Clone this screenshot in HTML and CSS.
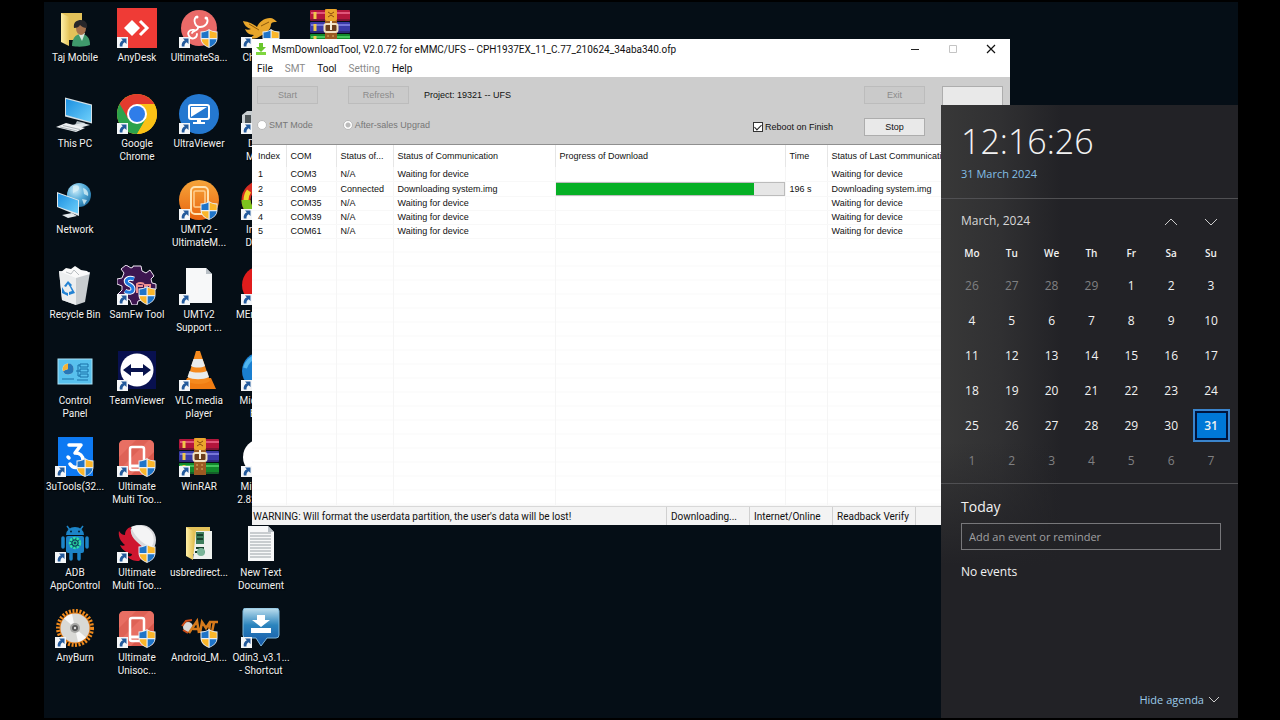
FILE: index.html
```html
<!DOCTYPE html>
<html lang="en">
<head>
  <meta charset="UTF-8">
  <meta name="viewport" content="width=device-width, initial-scale=1.0">
  <link rel="stylesheet" href="styles.css">
  <title>Desktop</title>
</head>
<body>

<!-- shared icon parts -->
<svg class="defs" aria-hidden="true">
  <defs>
    <linearGradient id="screen" x1="0" y1="0" x2="1" y2="1"><stop offset="0" stop-color="#1b8fe0"/><stop offset="1" stop-color="#6fd0fb"/></linearGradient>
    <linearGradient id="folder" x1="0" y1="0" x2="1" y2="0"><stop offset="0" stop-color="#fff0a8"/><stop offset="1" stop-color="#e6c65c"/></linearGradient>
    <linearGradient id="orange" x1="0" y1="0" x2="0" y2="1"><stop offset="0" stop-color="#f6a53a"/><stop offset="1" stop-color="#e8630f"/></linearGradient>
    <linearGradient id="odin" x1="0" y1="0" x2="0" y2="1"><stop offset="0" stop-color="#bfe0ef"/><stop offset=".45" stop-color="#2b84bd"/><stop offset="1" stop-color="#1557a8"/></linearGradient>
    <radialGradient id="globe" cx=".35" cy=".3" r=".8"><stop offset="0" stop-color="#cfeefb"/><stop offset=".5" stop-color="#58aeda"/><stop offset="1" stop-color="#1d6b9e"/></radialGradient>
    <symbol id="arrow" viewBox="0 0 40 40">
      <rect x="0" y="29" width="11" height="11" fill="#f4f6f8"/>
      <path d="M4 30.500h5.500v5.500l-1.800-1.800c-1.700 1-2.400 2.300-2.200 4.300H2.800c-.5-3 .6-5 3-6.200z" fill="#235a9c"/>
    </symbol>
    <symbol id="shield" viewBox="0 0 40 40">
      <path d="M30 21c2.500 1.800 5 2.400 8.500 2.500V30c0 4.500-3 7.500-8.500 10-5.500-2.500-8.500-5.500-8.500-10v-6.500c3.500 0 6-.7 8.500-2.500z" fill="#e9eef2"/>
      <path d="M29.500 22.500v7.500h-7v-5.500c3-.2 5-.8 7-2z" fill="#1f74c8"/>
      <path d="M30.700 22.500c2 1.200 4 1.800 7 2V30h-7z" fill="#fbb62a"/>
      <path d="M22.600 31.300h6.900V39c-4-2-6.500-4.200-6.900-7.700z" fill="#fbb62a"/>
      <path d="M30.700 31.300h6.900c-.5 3.500-2.900 5.700-6.900 7.700z" fill="#1f74c8"/>
    </symbol>
    <symbol id="winrar" viewBox="0 0 40 40">
      <rect x="0" y="2" width="40" height="11" rx="1" fill="#b3163c"/><path d="M1 4h39v2H1z" fill="#e0567a"/>
      <rect x="0" y="14" width="40" height="11" rx="1" fill="#3a3aa8"/><path d="M1 16h39v2H1z" fill="#7676d8"/>
      <rect x="0" y="26" width="40" height="11" rx="1" fill="#128a2c"/><path d="M1 28h39v2H1z" fill="#44c35c"/>
      <path d="M5 4v7M5 16v7M5 28v7" stroke="#f0c84a" stroke-width="3"/>
      <path d="M0 12h40M0 24h40M0 36h40" stroke="#1a1024" stroke-opacity=".35" stroke-width="2"/>
      <rect x="15" y="1" width="12" height="37" fill="#9b5a22"/>
      <rect x="15" y="1" width="12" height="12" rx="2" fill="#eaa62c"/>
      <path d="M18 4l3 2 3-2M18 9l3-2 3 2" stroke="#8b4a10" fill="none"/>
      <rect x="14.500" y="16" width="13" height="8" rx="2" fill="#6b3d1c" stroke="#f0e0c0" stroke-width="2"/>
      <path d="M21 13v9" stroke="#f7edda" stroke-width="2"/>
      <path d="M18 28h.1M23 28h.1M18 32h.1M23 32h.1" stroke="#e8c070" stroke-width="1.500" stroke-linecap="round"/>
    </symbol>
    <symbol id="redphone" viewBox="0 0 40 40">
      <rect x="2" y="3" width="35" height="35" rx="5" fill="#d9574b"/>
      <path d="M7 3h25a5 5 0 0 1 5 5v7L14 38H7a5 5 0 0 1-5-5V8a5 5 0 0 1 5-5z" fill="#e86f63"/>
      <path d="M2 20L19 3h13L2 33z" fill="#de6256"/>
      <rect x="13" y="10" width="14" height="23" rx="2" fill="none" stroke="#fff" stroke-width="2.500"/>
      <path d="M13 29h14" stroke="#fff" stroke-width="3"/>
    </symbol>
    <symbol id="page" viewBox="0 0 40 40">
      <path d="M7 3h20l6 6v29H7z" fill="#f7f8f9"/><path d="M27 3v6h6z" fill="#b9c0c6"/>
    </symbol>
  </defs>
</svg>

<main class="desktop">
  <nav class="icons" aria-label="Desktop icons">
    <a class="icon" href="#">
      <svg viewBox="0 0 40 40"><path d="M6 5h21v27H12z" fill="#e3c25a"/><path d="M6 5l8 4v29l-8-4z" fill="url(#folder)"/><path d="M17 38c0-7 3-12 9-12s9 4 9 11c-5 2-13 2-18 1z" fill="#3f9a6c"/><path d="M23 25h7l-3 8z" fill="#d8e8df"/><ellipse cx="26" cy="20" rx="5" ry="7" fill="#a5714c"/><path d="M19 20c-1-6 3-8 7-8s7 3 6 8c-3 0-5-1-7-3-1 2-3 3-6 3z" fill="#27262a"/></svg>
      <span>Taj Mobile</span>
    </a>
    <a class="icon" href="#">
      <svg viewBox="0 0 40 40"><path d="M10 3.500l27 7v19l-27-7z" fill="#d5e0e6"/><path d="M11 5l25 6.500v16.500l-25-7z" fill="url(#screen)"/><path d="M22 27l8 2-2 3-8-1z" fill="#aeb8be"/><path d="M17 31l11-2 7 2-11 3z" fill="#dfe5e8"/><path d="M1 33l10-4 19 5-9 4z" fill="#eef1f3"/><path d="M5 33l17 4M8 31.500l17 4" stroke="#98a2a8" stroke-width=".8"/></svg>
      <span>This PC</span>
    </a>
    <a class="icon" href="#">
      <svg viewBox="0 0 40 40"><circle cx="24" cy="15" r="12" fill="url(#globe)"/><path d="M18 6c4-2 7 0 6 3s-5 2-6 5M28 8c4 1 6 5 5 8l-4-2zM27 19l5 1-3 5z" fill="#d8f0f6" fill-opacity=".8"/><path d="M2 12l22 8v16L2 27z" fill="#dfe7eb"/><path d="M3 13.500l20 7v13l-20-7z" fill="url(#screen)"/><path d="M7 35l10-2 5 3-9 2z" fill="#e2e8eb"/></svg>
      <span>Network</span>
    </a>
    <a class="icon" href="#">
      <svg viewBox="0 0 40 40"><path d="M4 6l31 1-5 30-9 3-14-5z" fill="#c9cdd0"/><path d="M4 6l17 4v30L7 35z" fill="#eceeef"/><path d="M6 7l5-4 5 1 4-3 6 4 6 1 3 3-14 4z" fill="#fafafa"/><path d="M11 7l5 2 3-4 5 5" stroke="#b9bec1" fill="none"/><path d="M9 21l4-5 4 4-2 2-2-3-2 3zM16 21l4 7-6 2v-3l3-1-2-4zM7 22l3 5 3 1v3l-6-3z" fill="#2383d4"/></svg>
      <span>Recycle Bin</span>
    </a>
    <a class="icon" href="#">
      <svg viewBox="0 0 40 40"><rect x="3" y="8" width="34" height="25" fill="#58c1ee" stroke="#a9e2f7"/><circle cx="13" cy="18" r="5.500" fill="#fff3cf"/><path d="M13 18V12.500A5.500 5.500 0 1 1 8 20z" fill="#2877b8"/><path d="M13 18V12.500a5.500 5.500 0 0 0-5 7.500z" fill="#f2b238"/><path d="M21 20h4M23 14v11M25 13h8v3h-8zM25 18h8v3h-8zM25 23h8v3h-8zM23 14h2M23 25h2" stroke="#1870a8" fill="none"/><path d="M7 28h12M22 29h11" stroke="#1870a8"/></svg>
      <span>Control<br>Panel</span>
    </a>
    <a class="icon" href="#">
      <svg viewBox="0 0 40 40"><rect x="3" y="0" width="35" height="39" fill="#0d79f2"/><path d="M14 8h12l-6 8c5 0 8 3 8 7" fill="none" stroke="#fff" stroke-width="3.500" stroke-linejoin="round" stroke-linecap="round"/><path d="M13 20l1 1M15 27c2 3 5 4 8 3" fill="none" stroke="#fff" stroke-width="3.500" stroke-linecap="round"/><use href="#shield"/><use href="#arrow"/></svg>
      <span>3uTools(32...</span>
    </a>
    <a class="icon" href="#">
      <svg viewBox="0 0 40 40"><path d="M12 3l3 4M28 3l-3 4" stroke="#1c84c8" stroke-width="1.500"/><path d="M11 12a9 8 0 0 1 18 0z" fill="#1c84c8"/><circle cx="16" cy="8.500" r="1" fill="#062030"/><circle cx="24" cy="8.500" r="1" fill="#062030"/><rect x="11" y="13" width="18" height="17" rx="2" fill="#1c84c8"/><path d="M8 15v9M32 15v9M16 29v7M24 29v7" stroke="#1c84c8" stroke-width="3.500" stroke-linecap="round"/><circle cx="20" cy="20" r="5" fill="#0b4b62" stroke="#2fe0a8" stroke-width="2.500" stroke-dasharray="2.500 1"/><circle cx="20" cy="20" r="2" fill="none" stroke="#2fe0a8"/><use href="#arrow"/></svg>
      <span>ADB<br>AppControl</span>
    </a>
    <a class="icon" href="#">
      <svg viewBox="0 0 40 40"><circle cx="20" cy="20" r="17" fill="none" stroke="#f08a1c" stroke-width="4" stroke-dasharray="2 1.500"/><circle cx="20" cy="20" r="15.500" fill="#e07a18"/><circle cx="20" cy="20" r="14.500" fill="#d9d9d6"/><path d="M20 20L9 10.500A14.500 14.500 0 0 1 17 6zM20 20l11 9.500A14.500 14.500 0 0 1 23 34z" fill="#f8f8f8"/><circle cx="20" cy="20" r="5" fill="#a5a5a3"/><circle cx="20" cy="20" r="3" fill="#555"/><circle cx="20" cy="20" r="1.200" fill="#ddd"/><use href="#arrow"/></svg>
      <span>AnyBurn</span>
    </a>

    <a class="icon" href="#">
      <svg viewBox="0 0 40 40"><rect width="40" height="40" fill="#ef3b36"/><path d="M15 12l8 8-8 8-8-8z" fill="#fff"/><path d="M23 13l7 7-7 7" fill="none" stroke="#fff" stroke-width="3"/><use href="#arrow"/></svg>
      <span>AnyDesk</span>
    </a>
    <a class="icon" href="#">
      <svg viewBox="0 0 40 40"><circle cx="20" cy="20" r="20" fill="#fbc116"/><path d="M20 20L2.700 10A20 20 0 0 0 20 40l8.700-15z" fill="#2ba24c"/><path d="M2.700 10A20 20 0 0 1 37.300 10H20L11.300 25z" fill="#e33b2e"/><path d="M20 10h17.300A20 20 0 0 1 20 40l9-15z" fill="#fbc116"/><circle cx="20" cy="20" r="10" fill="#fff"/><circle cx="20" cy="20" r="8" fill="#2f7de9"/><use href="#arrow"/></svg>
      <span>Google<br>Chrome</span>
    </a>
    <div class="free-cell"></div>
    <a class="icon" href="#">
      <svg viewBox="0 0 40 40"><path d="M16 1h8l1 5 4 2 4-3 4 6-3 3 1 4 4 1v5l-4 2-2 4 2 4-6 4-4-3-4 1-1 4h-5l-2-5-4-2-5 2-3-6 4-4v-4l-5-2v-5l5-1 2-5-3-4 5-4 5 3 2-1z" fill="#3d1650" stroke="#f1e8f4"/><path d="M17 14c-6-2-9 1-7 4 2 2 6 2 6 6s-5 4-8 2" fill="none" stroke="#fff" stroke-width="5"/><path d="M17 14c-6-2-9 1-7 4 2 2 6 2 6 6s-5 4-8 2" fill="none" stroke="#1f79e0" stroke-width="3"/><path d="M20 28v-9c3-2 5-1 7 0M21 21h5M28 24v-4h5v4" stroke="#f09090" stroke-width="2" fill="none"/><use href="#shield"/><use href="#arrow"/></svg>
      <span>SamFw Tool</span>
    </a>
    <a class="icon" href="#">
      <svg viewBox="0 0 40 40"><rect x="1" y="0" width="38" height="38" fill="#08104f"/><circle cx="20" cy="19" r="16.500" fill="#fff"/><path d="M6 19l8-6v4h12v-4l8 6-8 6v-4H14v4z" fill="#08134d"/><use href="#arrow"/></svg>
      <span>TeamViewer</span>
    </a>
    <a class="icon" href="#">
      <svg viewBox="0 0 40 40"><use href="#redphone"/><use href="#shield"/><use href="#arrow"/></svg>
      <span>Ultimate<br>Multi Too...</span>
    </a>
    <a class="icon" href="#">
      <svg viewBox="0 0 40 40"><circle cx="24" cy="17" r="15" fill="#d9d9dc"/><path d="M14 4c7-4 17-1 21 6 3 6 2 12-2 15-4-4-14-8-19-21z" fill="#f4f4f5"/><path d="M14 4c-2 10 6 15 13 21 3 3 0 9-5 13-5 0-9-1-12-5 3 1 5 0 5-2-5-1-10-4-12-9 2 1 4 1 5 0C3 18 1 13 2 8c2 3 4 4 6 4 0-4 2-7 6-8z" fill="#cf1630"/><use href="#shield"/><use href="#arrow"/></svg>
      <span>Ultimate<br>Multi Too...</span>
    </a>
    <a class="icon" href="#">
      <svg viewBox="0 0 40 40"><use href="#redphone"/><use href="#shield"/><use href="#arrow"/></svg>
      <span>Ultimate<br>Unisoc...</span>
    </a>

    <a class="icon" href="#">
      <svg viewBox="0 0 40 40"><circle cx="20" cy="20" r="18" fill="#ea6a68"/><path d="M17 9c-3 3-1 10 4 10s9-4 7-9M19 19c1 4-5 3-6 6M15 22c-5-1-7 3-5 6 2 4 8 3 8-2" fill="none" stroke="#fff" stroke-width="1.800" stroke-linecap="round"/><circle cx="18" cy="9" r="1.500" fill="#fff"/><circle cx="27" cy="10" r="1.500" fill="#fff"/><use href="#shield"/><use href="#arrow"/></svg>
      <span>UltimateSa...</span>
    </a>
    <a class="icon" href="#">
      <svg viewBox="0 0 40 40"><circle cx="20" cy="20" r="20" fill="#2478d0"/><rect x="10" y="11" width="20" height="14" rx="2" fill="#2478d0" stroke="#fff" stroke-width="2"/><path d="M12 13h16L12 23z" fill="#fff"/><path d="M18 25h4v3h4v2H14v-2h4z" fill="#fff"/><use href="#arrow"/></svg>
      <span>UltraViewer</span>
    </a>
    <a class="icon" href="#">
      <svg viewBox="0 0 40 40"><circle cx="20" cy="20" r="20" fill="url(#orange)"/><rect x="12" y="7" width="17" height="27" rx="4" fill="none" stroke="#ffe3b3" stroke-width="2"/><rect x="15" y="11" width="11" height="16" rx="1" fill="none" stroke="#ffcf90" stroke-width="1.500"/><use href="#shield"/><use href="#arrow"/></svg>
      <span>UMTv2 -<br>UltimateM...</span>
    </a>
    <a class="icon" href="#">
      <svg viewBox="0 0 40 40"><use href="#page"/><use href="#arrow"/></svg>
      <span>UMTv2<br>Support ...</span>
    </a>
    <a class="icon" href="#">
      <svg viewBox="0 0 40 40"><path d="M8 27h24l5 11H3z" fill="#f07c12"/><path d="M17 0h4l10 30c-5 4-18 4-23 0z" fill="#f58a1e"/><path d="M14.500 8h9l2.500 7c-4 2-10 2-14 0zM10.500 20c5 2 12 2 17.500 0l2 6c-6 3-16 3-21.500 0z" fill="#e9ecec"/><use href="#arrow"/></svg>
      <span>VLC media<br>player</span>
    </a>
    <a class="icon" href="#">
      <svg viewBox="0 0 40 40"><use href="#winrar"/><use href="#arrow"/></svg>
      <span>WinRAR</span>
    </a>
    <a class="icon" href="#">
      <svg viewBox="0 0 40 40"><path d="M7 4h24v27H13z" fill="#e3c25a"/><path d="M17 8h16v28H14z" fill="#eef1ee"/><rect x="17" y="9" width="8" height="12" fill="#3e7d5c"/><path d="M18 12h6M18 16h6M17 25h8M16 29h10" stroke="#173f2c" stroke-width="2"/><circle cx="22" cy="29" r="4" fill="#7ab498"/><path d="M7 4l7 4v29l-7-4z" fill="url(#folder)"/></svg>
      <span>usbredirect...</span>
    </a>
    <a class="icon" href="#">
      <svg viewBox="0 0 40 40"><circle cx="9" cy="19" r="5" fill="#d8d8d8"/><path d="M3 18l4-5 6-1M4 22l5 3" stroke="#cc4b17" stroke-width="2" fill="none"/><path d="M10 25l8-12 2 12M14 21h6M21 25l2-11 4 6 4-6-1 11M30 14h9M35 14l-2 10" stroke="#d77a1c" stroke-width="2.500" fill="none"/><use href="#shield"/></svg>
      <span>Android_M...</span>
    </a>

    <a class="icon" href="#">
      <svg viewBox="0 0 40 40"><path d="M2 13c7 1 10 3 14 6 2-5 7-9 13-9 3 0 5 2 7 4-3 0-5 0-6 2 0 4-3 8-7 10l-7 4-8 1 5-4c-5 0-8-3-9-6 2 1 4 1 6 0-4-1-7-4-8-8z" fill="#e8a62b"/><path d="M8 16l10 6M20 18l8-4" stroke="#8e5a0c" fill="none"/><use href="#shield"/><use href="#arrow"/></svg>
      <span>Chimera</span>
    </a>
    <a class="icon" href="#">
      <svg viewBox="0 0 40 40"><path d="M1 21l5-4h22v18H1z" fill="#c9ced1"/><rect x="4" y="21" width="6" height="8" fill="#4c5356"/><use href="#arrow"/></svg>
      <span>Driver<br>Mobile</span>
    </a>
    <a class="icon" href="#">
      <svg viewBox="0 0 40 40"><circle cx="20" cy="20" r="15" fill="none" stroke="#d42c22" stroke-width="9"/><path d="M5 20a15 15 0 0 0 15 15" fill="none" stroke="#7cc21e" stroke-width="9"/><path d="M5 20a15 15 0 0 1 3-9" fill="none" stroke="#f0d62c" stroke-width="5"/><use href="#arrow"/></svg>
      <span>Infinity<br>Dongle</span>
    </a>
    <a class="icon" href="#">
      <svg viewBox="0 0 40 40"><circle cx="20" cy="20" r="19" fill="#e01c1c"/><use href="#arrow"/></svg>
      <span>MEmu Play</span>
    </a>
    <a class="icon" href="#">
      <svg viewBox="0 0 40 40"><circle cx="20" cy="20" r="19" fill="#1a7fd0"/><path d="M4 17C8 4 22 2 30 6" stroke="#4fb5f0" stroke-width="4" fill="none"/><use href="#arrow"/></svg>
      <span>Microsoft<br>Edge</span>
    </a>
    <a class="icon" href="#">
      <svg viewBox="0 0 40 40"><circle cx="20" cy="20" r="18" fill="#fff"/><use href="#arrow"/></svg>
      <span>Miracle 2<br>2.82 Crack</span>
    </a>
    <a class="icon" href="#">
      <svg viewBox="0 0 40 40"><use href="#page"/><path d="M9 10h21M9 13h21M9 16h21M9 19h21M9 22h21M9 25h21M9 28h21M9 31h21M9 34h21" stroke="#9aa1a6"/></svg>
      <span>New Text<br>Document</span>
    </a>
    <a class="icon" href="#">
      <svg viewBox="0 0 40 40"><path d="M5 0h30a3 3 0 0 1 3 3v24a3 3 0 0 1-3 3H26l-6 8-5-8H5a3 3 0 0 1-3-3V3a3 3 0 0 1 3-3z" fill="url(#odin)" stroke="#7fb9dc"/><path d="M16 7h8v5h5l-9 7-9-7h5zM10 20h20v5H10z" fill="#fff"/><use href="#arrow"/></svg>
      <span>Odin3_v3.1...<br>- Shortcut</span>
    </a>

    <a class="icon" href="#" aria-label="WinRAR archive">
      <svg viewBox="0 0 40 40"><use href="#winrar"/></svg>
    </a>
  </nav>

  <section class="window">
    <header class="titlebar">
      <svg class="app-icon" viewBox="0 0 12 12"><path d="M4 0h4v4h3L6 9 1 4h3z" fill="#6ac62c"/><path d="M1 9h10v3H1z" fill="#7fd63f"/></svg>
      <h1>MsmDownloadTool, V2.0.72 for eMMC/UFS -- CPH1937EX_11_C.77_210624_34aba340.ofp</h1>
      <div class="controls">
        <button aria-label="Minimize"><svg viewBox="0 0 10 10"><path d="M1 5.500h8" stroke="#222"/></svg></button>
        <button aria-label="Maximize" disabled><svg viewBox="0 0 10 10"><path d="M1.500 1.500h7v7h-7z" stroke="#c4c4c4" fill="none"/></svg></button>
        <button aria-label="Close"><svg viewBox="0 0 10 10"><path d="M1 1l8 8M9 1L1 9" stroke="#111" stroke-width="1.200"/></svg></button>
      </div>
    </header>
    <nav class="menu">
      <button>File</button>
      <button disabled>SMT</button>
      <button>Tool</button>
      <button disabled>Setting</button>
      <button>Help</button>
    </nav>

    <div class="toolbar">
      <div class="tools">
        <div class="tool-row">
          <button class="btn" disabled>Start</button>
          <button class="btn" disabled>Refresh</button>
          <span class="project">Project: 19321 -- UFS</span>
        </div>
        <div class="tool-row modes">
          <label><input type="radio" name="mode" disabled>SMT Mode</label>
          <label><input type="radio" name="mode" checked disabled>After-sales Upgrad</label>
        </div>
      </div>
      <label class="reboot"><input type="checkbox" checked>Reboot on Finish</label>
      <div class="actions">
        <button class="btn" disabled>Exit</button>
        <button class="btn">Stop</button>
      </div>
      <button class="btn blank" aria-label="Verify"></button>
    </div>

    <table class="ports">
      <colgroup>
        <col class="c-index"><col class="c-com"><col class="c-conn"><col class="c-comm"><col class="c-progress"><col class="c-time"><col>
      </colgroup>
      <thead>
        <tr><th>Index</th><th>COM</th><th>Status of...</th><th>Status of Communication</th><th>Progress of Download</th><th>Time</th><th>Status of Last Communication</th></tr>
      </thead>
      <tbody>
        <tr><td>1</td><td>COM3</td><td>N/A</td><td>Waiting for device</td><td></td><td></td><td>Waiting for device</td></tr>
        <tr><td>2</td><td>COM9</td><td>Connected</td><td>Downloading system.img</td><td class="bar-cell"><div class="bar"><div class="fill" style="width: 87%"></div></div></td><td>196 s</td><td>Downloading system.img</td></tr>
        <tr><td>3</td><td>COM35</td><td>N/A</td><td>Waiting for device</td><td></td><td></td><td>Waiting for device</td></tr>
        <tr><td>4</td><td>COM39</td><td>N/A</td><td>Waiting for device</td><td></td><td></td><td>Waiting for device</td></tr>
        <tr><td>5</td><td>COM61</td><td>N/A</td><td>Waiting for device</td><td></td><td></td><td>Waiting for device</td></tr>
        <tr class="rest"><td></td><td></td><td></td><td></td><td></td><td></td><td></td></tr>
      </tbody>
    </table>

    <footer class="statusbar">
      <span class="warning">WARNING: Will format the userdata partition, the user's data will be lost!</span>
      <span>Downloading...</span>
      <span>Internet/Online</span>
      <span>Readback Verify</span>
      <span></span>
    </footer>
  </section>

  <aside class="flyout">
    <div class="clock">
      <time>12:16:26</time>
      <a href="#">31 March 2024</a>
    </div>

    <div class="calendar">
      <div class="month">
        <button class="month-name">March, 2024</button>
        <button class="nav" aria-label="Previous month"><svg viewBox="0 0 14 8"><path d="M1 7l6-6 6 6"/></svg></button>
        <button class="nav" aria-label="Next month"><svg viewBox="0 0 14 8"><path d="M1 1l6 6 6-6"/></svg></button>
      </div>
      <table class="days">
        <thead>
          <tr><th>Mo</th><th>Tu</th><th>We</th><th>Th</th><th>Fr</th><th>Sa</th><th>Su</th></tr>
        </thead>
        <tbody>
          <tr><td class="off">26</td><td class="off">27</td><td class="off">28</td><td class="off">29</td><td>1</td><td>2</td><td>3</td></tr>
          <tr><td>4</td><td>5</td><td>6</td><td>7</td><td>8</td><td>9</td><td>10</td></tr>
          <tr><td>11</td><td>12</td><td>13</td><td>14</td><td>15</td><td>16</td><td>17</td></tr>
          <tr><td>18</td><td>19</td><td>20</td><td>21</td><td>22</td><td>23</td><td>24</td></tr>
          <tr><td>25</td><td>26</td><td>27</td><td>28</td><td>29</td><td>30</td><td><button class="today">31</button></td></tr>
          <tr><td class="off">1</td><td class="off">2</td><td class="off">3</td><td class="off">4</td><td class="off">5</td><td class="off">6</td><td class="off">7</td></tr>
        </tbody>
      </table>
    </div>

    <div class="agenda">
      <h2><label for="event">Today</label></h2>
      <input type="text" id="event" placeholder="Add an event or reminder">
      <p>No events</p>
      <button class="hide">Hide agenda <svg viewBox="0 0 14 8"><path d="M2 1l5 5 5-5"/></svg></button>
    </div>
  </aside>
</main>

</body>
</html>
```

FILE: styles.css
```css
* {
  box-sizing: border-box;
}
body {
  margin: 0;
  padding: 2px 42px 2px 44px;
  min-height: 100vh;
  display: flex;
  background-color: #000;
  font-family: "Open Sans", "Noto Sans", sans-serif;
}
button,
input {
  font: inherit;
  color: inherit;
  margin: 0;
}
button {
  padding: 0;
  border: none;
  background: none;
}
.defs {
  position: absolute;
  width: 0;
  height: 0;
}

.desktop {
  position: relative;
  flex: 1;
  display: flex;
  background-color: #050e16;
  overflow: hidden;
}

/* desktop icons */
.icons {
  display: grid;
  grid-template-columns: repeat(4, 62px) 76px;
  grid-template-rows: repeat(8, 1fr);
  grid-auto-flow: column;
  padding: 6px 0 24px;
}
.icon {
  display: flex;
  flex-direction: column;
  align-items: center;
  gap: 3px;
  font-family: Roboto, "Open Sans", sans-serif;
  font-size: 10px;
  line-height: 13px;
  text-align: center;
  white-space: nowrap;
  color: #f2f2f2;
  text-decoration: none;
  text-shadow: 1px 1px 1px #000;
}
.icon svg {
  width: 40px;
  height: 40px;
}

/* download tool window */
.window {
  position: absolute;
  top: 37px;
  left: 208px;
  right: 228px;
  background-color: #fff;
  color: #111;
  font-family: Roboto, "Open Sans", sans-serif;
  font-size: 10px;
}
.titlebar {
  display: flex;
  align-items: center;
  gap: 5px;
  height: 20px;
  padding-left: 3px;
}
.app-icon {
  width: 12px;
  height: 12px;
}
.titlebar h1 {
  margin: 0;
  flex: 1;
  font-size: 10px;
  font-weight: normal;
}
.controls {
  display: flex;
}
.controls button {
  width: 38px;
  height: 20px;
  display: flex;
  align-items: center;
  justify-content: center;
}
.controls svg {
  width: 10px;
  height: 10px;
}
.menu {
  display: flex;
  gap: 12px;
  height: 18px;
  padding-left: 5px;
}
.menu button:disabled {
  color: #8a8a8a;
}

.toolbar {
  display: flex;
  height: 68px;
  padding: 9px 7px 0 5px;
  background-color: #cdcdcd;
  border-bottom: 1px solid #8f8f8f;
  font-family: "Liberation Sans", Arial, sans-serif;
  font-size: 9px;
  overflow: hidden;
}
.tools {
  flex: 1;
}
.tool-row {
  display: flex;
  align-items: center;
  gap: 30px;
}
.btn {
  width: 61px;
  height: 18px;
  background-color: #e9e9e9;
  border: 1px solid #adadad;
}
.btn:disabled {
  background-color: #cacaca;
  border-color: #bcbcbc;
  color: #8a8a8a;
}
.project {
  margin-left: -15px;
}
.modes {
  margin-top: 16px;
  color: #777;
}
.modes label,
.reboot {
  display: flex;
  align-items: center;
  gap: 2px;
}
.toolbar input {
  appearance: none;
  width: 10px;
  height: 10px;
  background-color: #fff;
}
.toolbar input[type="radio"] {
  border: 1px solid #bbb;
  border-radius: 50%;
}
.toolbar input[type="radio"]:checked {
  background: radial-gradient(circle, #bbb 2px, #fff 3px);
}
.toolbar input[type="checkbox"] {
  display: flex;
  justify-content: center;
  border: 1px solid #333;
}
.toolbar input[type="checkbox"]:checked::before {
  content: "";
  width: 3px;
  height: 6px;
  border: solid #222;
  border-width: 0 1px 1px 0;
  transform: rotate(45deg);
}
.reboot {
  align-self: flex-start;
  margin: 36px 31px 0 0;
}
.actions {
  display: flex;
  flex-direction: column;
  gap: 14px;
}
.blank {
  margin-left: 17px;
  height: 50px;
}

.ports {
  width: 100%;
  height: 361px;
  table-layout: fixed;
  border-collapse: collapse;
  font-family: "Liberation Sans", Arial, sans-serif;
  font-size: 9px;
  line-height: 12px;
}
.c-index { width: 34px; }
.c-com { width: 50px; }
.c-conn { width: 57px; }
.c-comm { width: 162px; }
.c-progress { width: 230px; }
.c-time { width: 42px; }
.ports th,
.ports td {
  padding: 0 0 0 4px;
  border-right: 1px solid #f5f5f5;
  text-align: left;
  font-weight: normal;
  white-space: nowrap;
}
.ports th {
  height: 22px;
  border-color: #e6e6e6;
}
.ports td {
  height: 14px;
  border-bottom: 1px solid #f8f8f8;
}
.ports th:first-child,
.ports td:first-child {
  padding-left: 6px;
}
.ports .bar-cell {
  padding: 0;
}
.bar {
  height: 14px;
  background-color: #e6e6e6;
  border: 1px solid #bcbcbc;
  border-left: none;
}
.fill {
  height: 100%;
  background-color: #06b025;
}
.ports .rest td {
  height: auto;
  background: repeating-linear-gradient(#fff 0, #fff 13px, #f8f8f8 13px, #f8f8f8 14px);
}

.statusbar {
  display: flex;
  height: 19px;
  background-color: #f3f3f3;
  border-top: 1px solid #d8d8d8;
  line-height: 19px;
  white-space: nowrap;
}
.statusbar span {
  width: 83px;
  padding-left: 4px;
  border-left: 1px solid #d0d0d0;
}
.statusbar .warning {
  width: 414px;
  padding-left: 1px;
  border: none;
}

/* clock and calendar */
.flyout {
  position: absolute;
  top: 103px;
  right: 0;
  bottom: 0;
  width: 297px;
  display: flex;
  flex-direction: column;
  background:
    linear-gradient(transparent 55%, #222226 75%),
    linear-gradient(90deg, #383838 0, #303032 60px, #222226 120px);
  color: #f2f2f2;
}
.clock {
  display: flex;
  flex-direction: column;
  height: 94px;
  padding: 12px 20px 0;
  border-bottom: 1px solid #505053;
}
.clock time {
  font-size: 34px;
  font-weight: 300;
  line-height: 48px;
}
.clock a {
  font-size: 11px;
  line-height: 18px;
  color: #84bfe6;
  text-decoration: none;
}
.calendar {
  padding: 9px 7px 5px 11px;
  border-bottom: 1px solid #505053;
}
.month {
  display: flex;
  height: 24px;
}
.month-name {
  flex: 1;
  padding-left: 9px;
  text-align: left;
  font-size: 12px;
  color: #d8d8d8;
}
.nav {
  width: 40px;
}
.flyout svg {
  width: 14px;
  height: 8px;
  fill: none;
  stroke: #ccc;
}
.days {
  width: 100%;
  table-layout: fixed;
  border-collapse: collapse;
  font-size: 12px;
}
.days th {
  height: 36px;
  padding: 6px 0 0;
  font-size: 10px;
  font-weight: 600;
}
.days td {
  height: 35px;
  padding: 0;
  text-align: center;
}
.days .off {
  color: #808082;
}
.today {
  width: 37px;
  height: 33px;
  background-color: #0078d7;
  border: 2px solid #3a84cc;
  box-shadow: inset 0 0 0 2px #00143c;
  font-weight: 600;
  vertical-align: middle;
}
.agenda {
  flex: 1;
  display: flex;
  flex-direction: column;
  padding: 13px 17px 11px 20px;
  font-size: 12px;
}
.agenda h2 {
  margin: 0 0 6px;
  font-size: 14px;
  font-weight: normal;
  line-height: 20px;
}
.agenda input {
  height: 27px;
  padding: 0 7px;
  font-size: 11px;
  background-color: transparent;
  border: 1px solid #77777a;
}
.agenda input::placeholder {
  color: #a0a0a2;
}
.agenda p {
  margin: 13px 0 0;
  line-height: 18px;
}
.hide {
  display: flex;
  align-items: center;
  gap: 3px;
  margin: auto 0 0 auto;
  font-size: 11px;
  color: #9ccbe9;
}
```
